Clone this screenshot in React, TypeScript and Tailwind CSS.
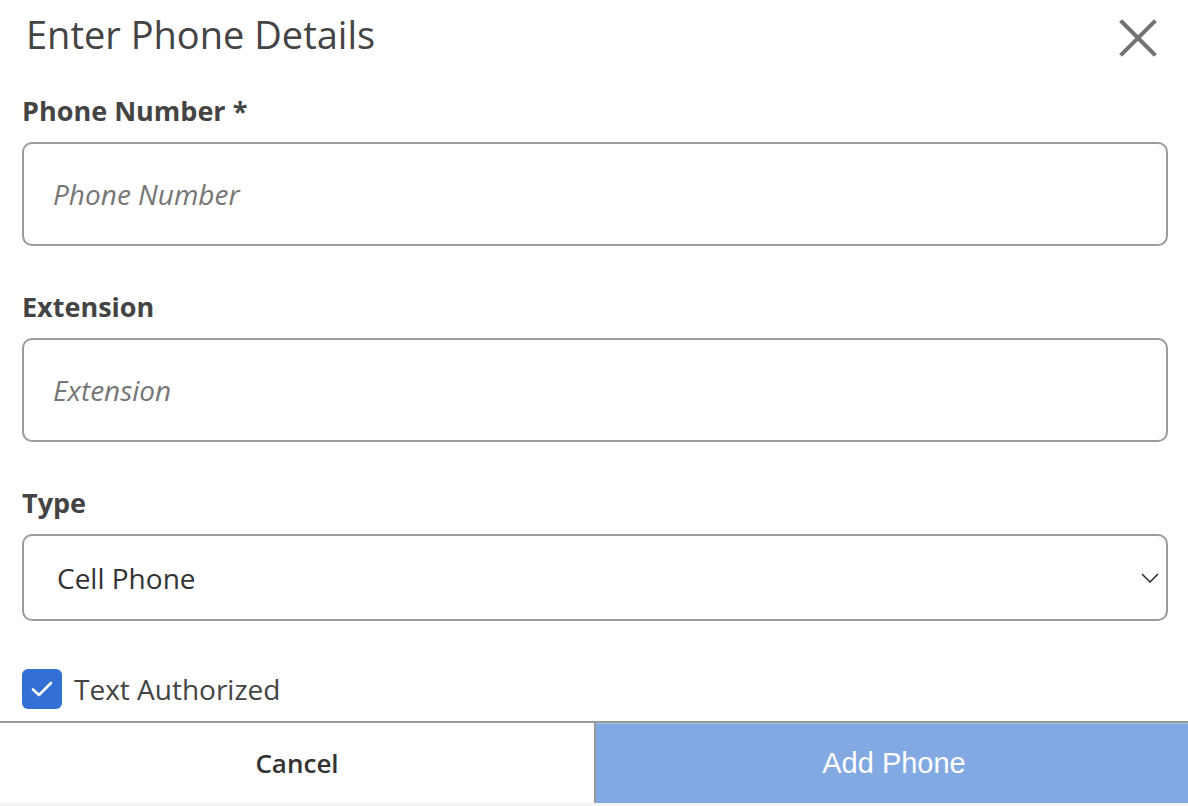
import React, { useState } from 'react';

const font = { fontFamily: '"Open Sans", "Noto Sans", sans-serif' };

const CloseIcon: React.FC = () => (
  <svg viewBox="0 0 40 40" className="w-[40px] h-[40px]" fill="none" stroke="#737373" strokeWidth="4" strokeLinecap="square">
    <path d="M4 4 L36 36 M36 4 L4 36" />
  </svg>
);

const Chevron: React.FC = () => (
  <svg viewBox="0 0 18 10" className="w-[18px] h-[10px]" fill="none" stroke="#333" strokeWidth="1.6">
    <path d="M1 1 L9 9 L17 1" />
  </svg>
);

const Field: React.FC<{ label: string; placeholder: string }> = ({ label, placeholder }) => (
  <div className="flex flex-col">
    <label className="text-[27px] font-bold text-[#444] leading-[36px]">{label}</label>
    <input
      placeholder={placeholder}
      className="mt-[13px] h-[104px] rounded-[10px] border-2 border-[#9b9b9b] px-[29px] text-[28px] text-[#333] placeholder:italic placeholder:text-[#767676] outline-none"
      style={font}
    />
  </div>
);

const App: React.FC = () => {
  const [textAuth, setTextAuth] = useState(true);

  return (
    <div className="w-[1188px] h-[806px] bg-white flex flex-col overflow-hidden" style={font}>
      <div className="flex-1 pl-[22px] pr-[20px]">
        <div className="flex items-start justify-between pt-[10px]">
          <h2 className="text-[38px] text-[#444] leading-[48px] pl-[4px]">Enter Phone Details</h2>
          <button className="mt-[8px] mr-[10px]" aria-label="Close">
            <CloseIcon />
          </button>
        </div>

        <div className="mt-[35px] flex flex-col gap-[43px]">
          <Field label="Phone Number *" placeholder="Phone Number" />
          <Field label="Extension" placeholder="Extension" />
          <div className="flex flex-col">
            <label className="text-[27px] font-bold text-[#444] leading-[36px]">Type</label>
            <div className="mt-[13px] h-[87px] rounded-[10px] border-2 border-[#9b9b9b] pl-[33px] pr-[7px] flex items-center justify-between">
              <span className="text-[28px] text-[#333]">Cell Phone</span>
              <Chevron />
            </div>
          </div>
        </div>

        <label className="mt-[47px] flex items-center gap-[12px] cursor-pointer">
          <button
            onClick={() => setTextAuth(!textAuth)}
            className="w-[40px] h-[40px] rounded-[6px] bg-[#3370d6] flex items-center justify-center"
          >
            {textAuth && (
              <svg viewBox="0 0 24 24" className="w-[24px] h-[24px]" fill="none" stroke="white" strokeWidth="2.6" strokeLinecap="round" strokeLinejoin="round">
                <path d="M3 12.5 L9 18 L21 6" />
              </svg>
            )}
          </button>
          <span className="text-[28px] text-[#444]">Text Authorized</span>
        </label>
      </div>

      <div className="h-[85px] flex border-t-2 border-[#999] border-b-[3px] border-b-[#f4f4f4]">
        <button className="w-[596px] bg-white border-r-2 border-[#999] text-[26px] font-semibold text-[#333]">Cancel</button>
        <button
          className="flex-1 bg-[#83a9e3] border-t border-[#9fc6f2] text-white text-[29px] pl-[4px]"
          style={{ fontFamily: '"Liberation Sans", Arial, sans-serif' }}
        >
          Add Phone
        </button>
      </div>
    </div>
  );
};

export default App;
